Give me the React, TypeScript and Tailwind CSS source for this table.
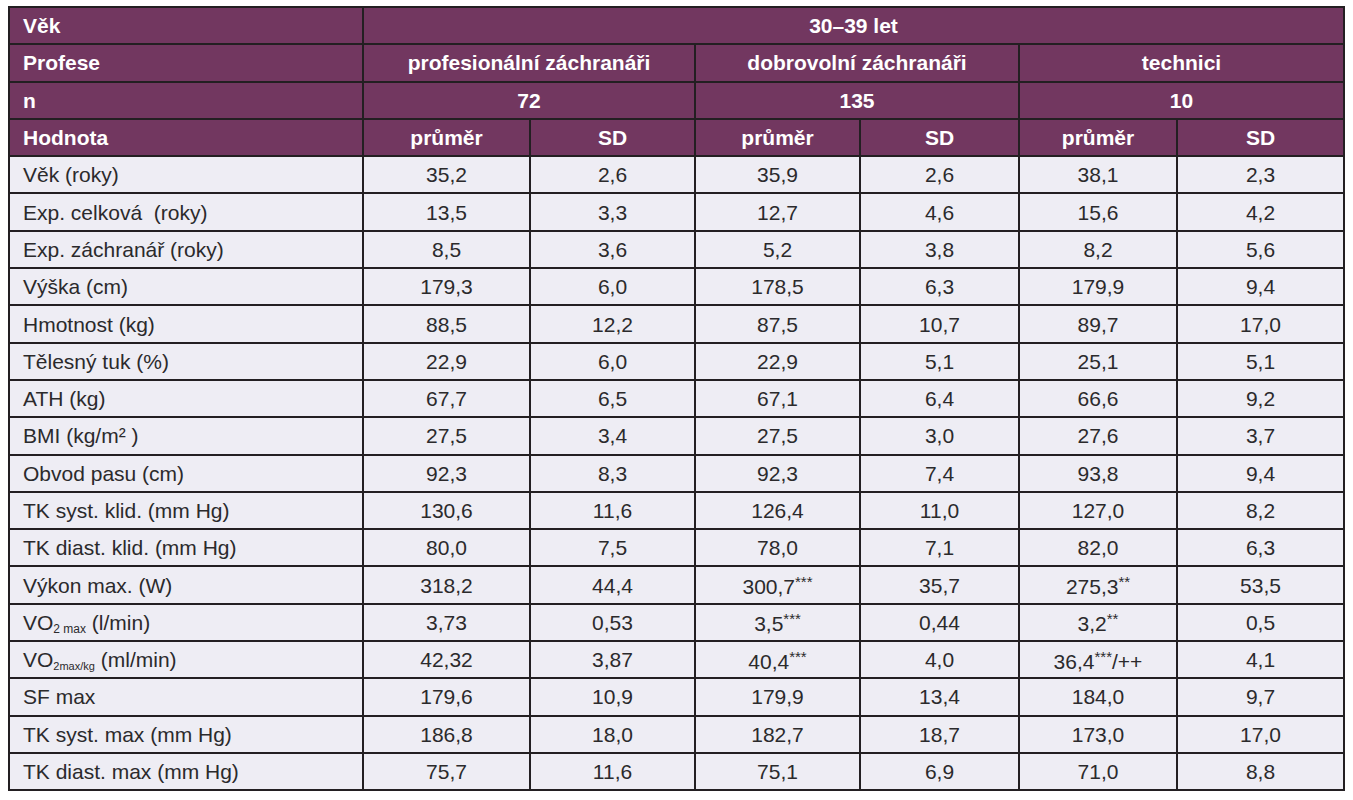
import type { ReactNode } from "react";

type Row = { label: ReactNode; values: ReactNode[] };

const sup = (base: string, marks: string, tail = "") => (
  <>
    {base}
    <sup className="relative top-[1px] text-[15px] align-super leading-none">{marks}</sup>
    {tail}
  </>
);

const rows: Row[] = [
  { label: "Věk (roky)", values: ["35,2", "2,6", "35,9", "2,6", "38,1", "2,3"] },
  { label: "Exp. celková  (roky)", values: ["13,5", "3,3", "12,7", "4,6", "15,6", "4,2"] },
  { label: "Exp. záchranář (roky)", values: ["8,5", "3,6", "5,2", "3,8", "8,2", "5,6"] },
  { label: "Výška (cm)", values: ["179,3", "6,0", "178,5", "6,3", "179,9", "9,4"] },
  { label: "Hmotnost (kg)", values: ["88,5", "12,2", "87,5", "10,7", "89,7", "17,0"] },
  { label: "Tělesný tuk (%)", values: ["22,9", "6,0", "22,9", "5,1", "25,1", "5,1"] },
  { label: "ATH (kg)", values: ["67,7", "6,5", "67,1", "6,4", "66,6", "9,2"] },
  { label: "BMI (kg/m² )", values: ["27,5", "3,4", "27,5", "3,0", "27,6", "3,7"] },
  { label: "Obvod pasu (cm)", values: ["92,3", "8,3", "92,3", "7,4", "93,8", "9,4"] },
  { label: "TK syst. klid. (mm Hg)", values: ["130,6", "11,6", "126,4", "11,0", "127,0", "8,2"] },
  { label: "TK diast. klid. (mm Hg)", values: ["80,0", "7,5", "78,0", "7,1", "82,0", "6,3"] },
  {
    label: "Výkon max. (W)",
    values: ["318,2", "44,4", sup("300,7", "***"), "35,7", sup("275,3", "**"), "53,5"],
  },
  {
    label: (
      <>
        VO<sub className="text-[12px] leading-none">2 max</sub> (l/min)
      </>
    ),
    values: ["3,73", "0,53", sup("3,5", "***"), "0,44", sup("3,2", "**"), "0,5"],
  },
  {
    label: (
      <>
        VO<sub className="text-[11px] leading-none">2max/kg</sub> (ml/min)
      </>
    ),
    values: ["42,32", "3,87", sup("40,4", "***"), "4,0", sup("36,4", "***", "/++"), "4,1"],
  },
  { label: "SF max", values: ["179,6", "10,9", "179,9", "13,4", "184,0", "9,7"] },
  { label: "TK syst. max (mm Hg)", values: ["186,8", "18,0", "182,7", "18,7", "173,0", "17,0"] },
  { label: "TK diast. max (mm Hg)", values: ["75,7", "11,6", "75,1", "6,9", "71,0", "8,8"] },
];

const th = "h-[37.3px] border-2 border-[#231f22] bg-[#723760] font-bold text-white p-0 leading-none";
const td = "h-[37.3px] border-2 border-[#231f22] bg-[#eeedf4] p-0 leading-none";

export default function App() {
  return (
    <div className="min-h-[800px] bg-white pl-[8px] pt-[6px] font-['Liberation_Sans',Arial,sans-serif] text-[21px] text-[#2b2a2c]">
      <table className="w-[1335px] table-fixed border-collapse">
        <colgroup>
          <col className="w-[354px]" />
          <col className="w-[167px]" />
          <col className="w-[165px]" />
          <col className="w-[165px]" />
          <col className="w-[159px]" />
          <col className="w-[158px]" />
          <col className="w-[167px]" />
        </colgroup>
        <thead>
          <tr>
            <th className={`${th} pl-[13px] text-left`}>Věk</th>
            <th colSpan={6} className={`${th} text-center`}>
              30–39 let
            </th>
          </tr>
          <tr>
            <th className={`${th} pl-[13px] text-left`}>Profese</th>
            <th colSpan={2} className={`${th} text-center`}>
              profesionální záchranáři
            </th>
            <th colSpan={2} className={`${th} text-center`}>
              dobrovolní záchranáři
            </th>
            <th colSpan={2} className={`${th} text-center`}>
              technici
            </th>
          </tr>
          <tr>
            <th className={`${th} pl-[13px] text-left`}>n</th>
            <th colSpan={2} className={`${th} text-center`}>
              72
            </th>
            <th colSpan={2} className={`${th} text-center`}>
              135
            </th>
            <th colSpan={2} className={`${th} text-center`}>
              10
            </th>
          </tr>
          <tr>
            <th className={`${th} pl-[13px] text-left`}>Hodnota</th>
            {["průměr", "SD", "průměr", "SD", "průměr", "SD"].map((h, i) => (
              <th key={i} className={`${th} text-center`}>
                {h}
              </th>
            ))}
          </tr>
        </thead>
        <tbody>
          {rows.map((r, i) => (
            <tr key={i}>
              <td className={`${td} pl-[13px] text-left whitespace-pre`}>{r.label}</td>
              {r.values.map((v, j) => (
                <td key={j} className={`${td} text-center`}>
                  {v}
                </td>
              ))}
            </tr>
          ))}
        </tbody>
      </table>
    </div>
  );
}
